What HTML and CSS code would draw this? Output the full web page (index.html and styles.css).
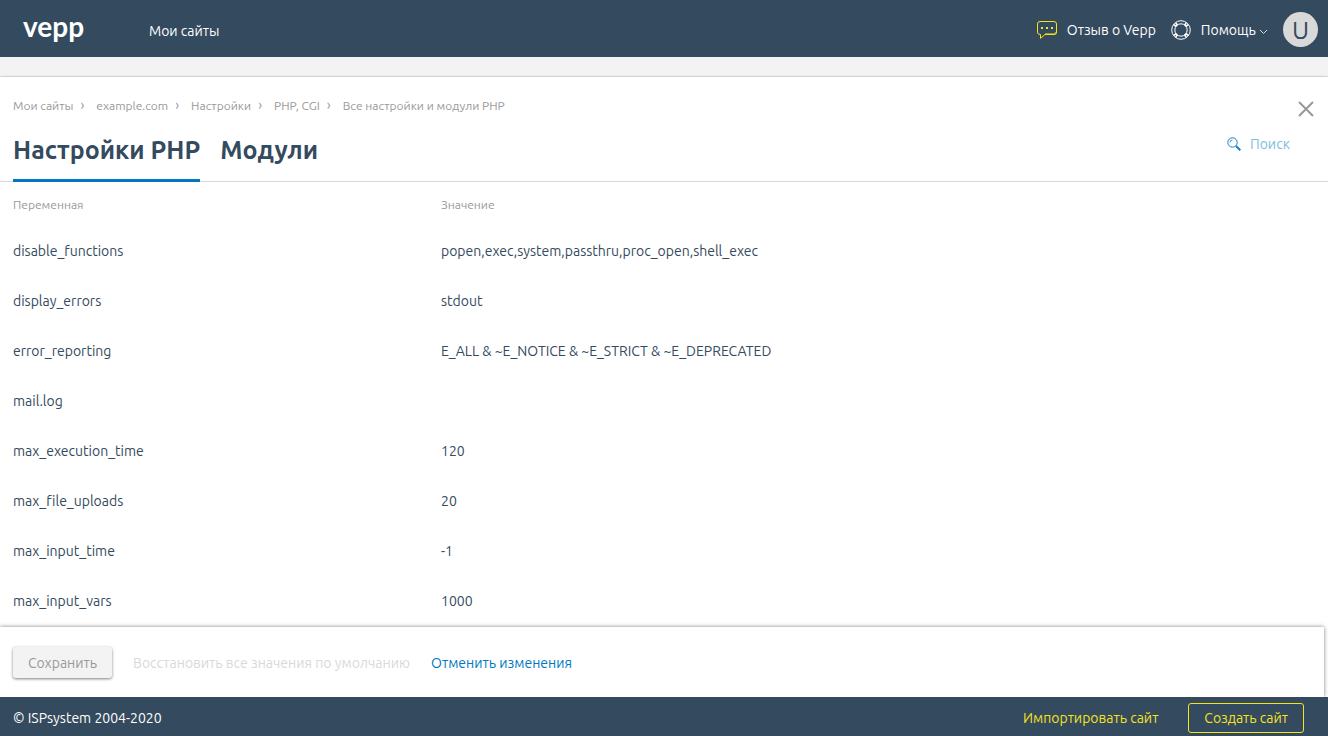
FILE: index.html
```html
<!DOCTYPE html>
<html lang="ru">
<head>
  <meta charset="UTF-8">
  <meta name="viewport" content="width=device-width, initial-scale=1.0">
  <title>Все настройки и модули PHP</title>
  <link rel="stylesheet" href="styles.css">
</head>
<body>
  <header class="topbar">
    <a href="#" class="logo">vepp</a>
    <nav class="main-nav"><a href="#">Мои сайты</a></nav>
    <div class="user-tools">
      <a href="#" class="tool">
        <svg width="20" height="18" viewBox="0 0 20 18" fill="none" stroke="#f5e31d">
          <path d="M3 .5h14a2.500 2.500 0 0 1 2.500 2.500v8a2.500 2.500 0 0 1-2.500 2.500H8L3.500 17.300V13.500H3A2.500 2.500 0 0 1 .5 11V3A2.500 2.500 0 0 1 3 .5z"/>
          <path d="M8 13h9a2 2 0 0 0 2-2" stroke-opacity=".5" stroke-width="2"/>
          <path d="M4 7h2M9 7h2M14 7h2" stroke-width="2"/>
        </svg>
        Отзыв о Vepp
      </a>
      <button type="button" class="tool">
        <svg width="20" height="20" viewBox="0 0 20 20" fill="none" stroke="#fff">
          <circle cx="10" cy="10" r="9.300"/>
          <circle cx="10" cy="10" r="6.200"/>
          <path d="M2.800 4.800l2.700 1.700M4.800 2.800l1.700 2.700M17.200 4.800l-2.700 1.700M15.200 2.800l-1.700 2.700M2.800 15.200l2.700-1.700M4.800 17.200l1.700-2.700M17.200 15.200l-2.700-1.700M15.200 17.200l-1.700-2.700" stroke-width="1.600"/>
        </svg>
        <span>Помощь
          <svg width="9" height="6" viewBox="0 0 9 6" fill="none" stroke="#d5dbe0"><path d="M1 1l3.500 3.500L8 1"/></svg>
        </span>
      </button>
      <button type="button" class="avatar">U</button>
    </div>
  </header>

  <main class="page">
    <div class="page-head">
      <nav class="breadcrumbs">
        <a href="#">Мои сайты</a>
        <a href="#">example.com</a>
        <a href="#">Настройки</a>
        <a href="#">PHP, CGI</a>
        <a href="#">Все настройки и модули PHP</a>
      </nav>
      <button type="button" class="close" aria-label="Закрыть">
        <svg width="16" height="16" viewBox="0 0 16 16" stroke="#999" stroke-width="2"><path d="M1 1l14 14M15 1L1 15"/></svg>
      </button>
    </div>

    <div class="tabs-row">
      <div class="tabs">
        <button type="button" class="tab active">Настройки PHP</button>
        <button type="button" class="tab">Модули</button>
      </div>
      <div class="search">
        <label for="search" aria-label="Поиск">
          <svg width="14" height="14" viewBox="0 0 14 14" fill="none" stroke="#1583c8">
            <circle cx="5.500" cy="5.500" r="4.700"/>
            <path d="M3 5.500A2.500 2.500 0 0 1 5.500 3" stroke-width=".8"/>
            <path d="M9 9l4.300 4.300" stroke-width="2"/>
          </svg>
        </label>
        <input type="text" id="search" placeholder="Поиск">
      </div>
    </div>

    <div class="table-wrap">
      <table class="settings">
        <thead>
          <tr><th>Переменная</th><th>Значение</th></tr>
        </thead>
        <tbody>
          <tr><td>disable_functions</td><td>popen,exec,system,passthru,proc_open,shell_exec</td></tr>
          <tr><td>display_errors</td><td>stdout</td></tr>
          <tr><td>error_reporting</td><td>E_ALL &amp; ~E_NOTICE &amp; ~E_STRICT &amp; ~E_DEPRECATED</td></tr>
          <tr><td>mail.log</td><td></td></tr>
          <tr><td>max_execution_time</td><td>120</td></tr>
          <tr><td>max_file_uploads</td><td>20</td></tr>
          <tr><td>max_input_time</td><td>-1</td></tr>
          <tr><td>max_input_vars</td><td>1000</td></tr>
        </tbody>
      </table>
    </div>

    <div class="actions">
      <button type="button" class="save" disabled>Сохранить</button>
      <button type="button" class="link-btn" disabled>Восстановить все значения по умолчанию</button>
      <button type="button" class="link-btn">Отменить изменения</button>
    </div>
  </main>

  <footer class="footer">
    <span>© ISPsystem 2004-2020</span>
    <div class="footer-links">
      <a href="#">Импортировать сайт</a>
      <button type="button" class="create">Создать сайт</button>
    </div>
  </footer>
</body>
</html>
```

FILE: styles.css
```css
* {
  box-sizing: border-box;
}
body {
  margin: 0;
  height: 100vh;
  display: flex;
  flex-direction: column;
  background: #f3f3f3;
  color: #344a5e;
  font: 14px/20px Ubuntu, "Noto Sans", sans-serif;
  text-rendering: optimizeSpeed;
}
a {
  color: inherit;
  text-decoration: none;
}
button {
  padding: 0;
  border: none;
  background: none;
  color: inherit;
  font: inherit;
  text-rendering: inherit;
  cursor: pointer;
}
svg {
  flex: none;
}

/* header */
.topbar {
  flex: none;
  display: flex;
  align-items: center;
  height: 57px;
  padding: 4px 10px 0 23px;
  background: #344a5e;
  color: #fff;
}
.logo {
  width: 126px;
  padding-bottom: 10px;
  font: bold 28px/32px Lato, sans-serif;
}
.user-tools {
  display: flex;
  align-items: center;
  gap: 15px;
  margin-left: auto;
  padding-bottom: 2px;
}
.tool {
  display: flex;
  align-items: center;
  gap: 10px;
}
.avatar {
  width: 35px;
  height: 35px;
  border-radius: 50%;
  background: #d9d9d9;
  color: #344a5e;
  font-size: 25px;
}

/* page */
.page {
  flex: 1;
  min-height: 0;
  display: flex;
  flex-direction: column;
  margin-top: 20px;
  background: #fff;
  box-shadow: 0 0 2px rgba(0, 0, 0, 0.4);
}
.page-head {
  display: flex;
  justify-content: space-between;
  height: 48px;
  padding: 18px 14px 0 13px;
}
.breadcrumbs {
  display: flex;
  align-items: baseline;
  color: #999;
  font-size: 12px;
}
.breadcrumbs a:not(:last-child)::after {
  content: "›";
  margin: 0 12px 0 7px;
  font-size: 14px;
}
.close {
  height: 28px;
  display: flex;
  align-items: center;
}
.tabs-row {
  flex: none;
  display: flex;
  justify-content: space-between;
  height: 57px;
  padding: 0 13px;
  border-bottom: 1px solid #d9d9d9;
}
.tabs {
  display: flex;
  gap: 20px;
}
.tab {
  height: 57px;
  padding-bottom: 4px;
  border-bottom: 3px solid transparent;
  font-size: 25px;
  font-weight: 600;
}
.tab.active {
  border-color: #0079c1;
}
.search {
  display: flex;
  align-items: center;
  gap: 9px;
  height: 38px;
}
.search label {
  display: flex;
}
.search input {
  width: 65px;
  padding: 0;
  border: none;
  outline: none;
  background: none;
  font: inherit;
}
.search input::placeholder {
  color: #7fbce0;
}

/* table */
.table-wrap {
  flex: 1;
  min-height: 0;
  overflow: hidden;
  padding: 0 31px 0 13px;
}
.settings {
  width: 100%;
  table-layout: fixed;
  border-collapse: collapse;
}
.settings th {
  height: 44px;
  padding: 2px 0 0;
  color: #999;
  font-size: 12px;
  font-weight: normal;
  text-align: left;
}
.settings th:first-child {
  width: 33.3333%;
}
.settings td {
  height: 50px;
  padding: 0;
}

/* bottom actions */
.actions {
  position: relative;
  flex: none;
  display: flex;
  align-items: center;
  gap: 21px;
  height: 70px;
  margin-right: 4px;
  padding: 0 13px;
  background: #fff;
  box-shadow: 0 0 4px rgba(0, 0, 0, 0.5);
}
.save {
  height: 31px;
  padding: 1px 15px 0;
  border-radius: 3px;
  background: #f3f3f3;
  color: #999;
  box-shadow: 0 1px 3px rgba(0, 0, 0, 0.5);
}
.link-btn {
  padding-top: 2px;
  color: #0079c1;
}
.link-btn:disabled {
  color: #d9d9d9;
}

/* footer */
.footer {
  position: relative;
  flex: none;
  display: flex;
  align-items: center;
  justify-content: space-between;
  height: 39px;
  padding: 2px 24px 0 13px;
  background: #344a5e;
  color: #fff;
}
.footer-links {
  display: flex;
  align-items: center;
  gap: 30px;
  color: #f5e31d;
}
.create {
  height: 30px;
  padding: 0 15px;
  border: 1px solid #f5e31d;
  border-radius: 3px;
}
```
